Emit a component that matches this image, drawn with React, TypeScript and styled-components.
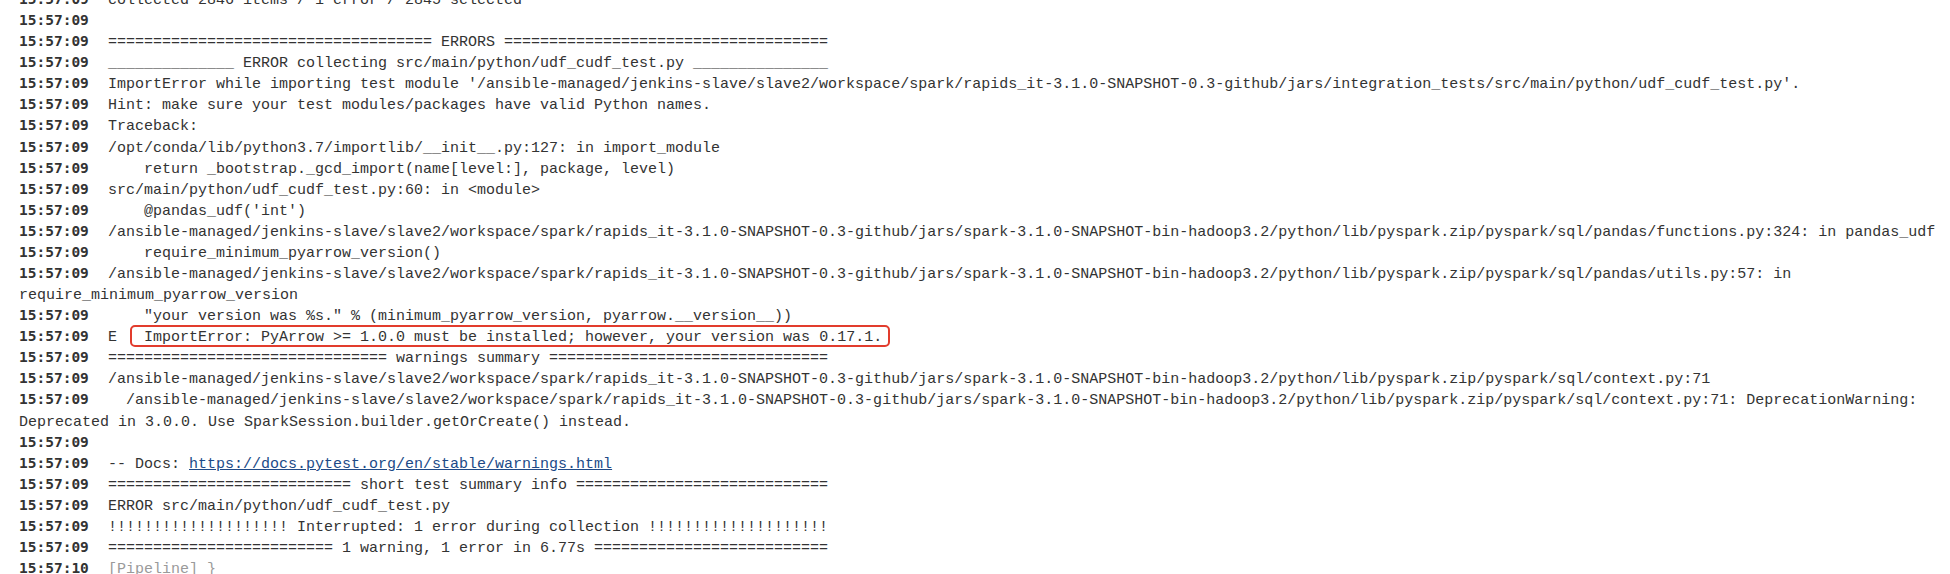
import React from 'react';
import styled, { createGlobalStyle } from 'styled-components';

const Global = createGlobalStyle`
  html, body { margin: 0; padding: 0; background: #ffffff; }
  body { overflow: hidden; }
`;

const Console = styled.pre`
  margin: -10px 0 0 0;
  padding: 0 0 0 19px;
  font-family: "Liberation Mono", "Courier New", monospace;
  font-size: 15px;
  line-height: 21.08px;
  color: #333333;
  white-space: pre;
  overflow: hidden;
`;

const Line = styled.div`
  line-height: 21.08px;
`;

const Stamp = styled.span`
  display: inline-block;
  width: 89px;
  font-family: "DejaVu Sans Mono", monospace;
  font-weight: bold;
  font-size: 14.5px;
  line-height: 1;
  color: #333333;
`;

const Muted = styled.span`
  color: #9a9a9a;
`;

const Link = styled.a`
  color: #204a87;
  text-decoration: underline;
`;

const Marked = styled.span`
  position: relative;
  &::after {
    content: "";
    position: absolute;
    left: -14px;
    right: -8px;
    top: -4px;
    bottom: -1px;
    border: 2px solid #e23c2d;
    border-radius: 5px;
    pointer-events: none;
  }
`;

const sep = (c: string, l: number, title: string, r: number) =>
  c.repeat(l) + ' ' + title + ' ' + c.repeat(r);

const JAR =
  '/ansible-managed/jenkins-slave/slave2/workspace/spark/rapids_it-3.1.0-SNAPSHOT-0.3-github/jars/spark-3.1.0-SNAPSHOT-bin-hadoop3.2/python/lib/pyspark.zip/pyspark/sql/';

type Entry = { ts?: string; content: React.ReactNode };

const T = '15:57:09';

const lines: Entry[] = [
  { ts: T, content: 'collected 2846 items / 1 error / 2845 selected' },
  { ts: T, content: '' },
  { ts: T, content: sep('=', 36, 'ERRORS', 36) },
  { ts: T, content: sep('_', 14, 'ERROR collecting src/main/python/udf_cudf_test.py', 15) },
  {
    ts: T,
    content:
      "ImportError while importing test module '/ansible-managed/jenkins-slave/slave2/workspace/spark/rapids_it-3.1.0-SNAPSHOT-0.3-github/jars/integration_tests/src/main/python/udf_cudf_test.py'.",
  },
  { ts: T, content: 'Hint: make sure your test modules/packages have valid Python names.' },
  { ts: T, content: 'Traceback:' },
  { ts: T, content: '/opt/conda/lib/python3.7/importlib/__init__.py:127: in import_module' },
  { ts: T, content: '    return _bootstrap._gcd_import(name[level:], package, level)' },
  { ts: T, content: 'src/main/python/udf_cudf_test.py:60: in <module>' },
  { ts: T, content: "    @pandas_udf('int')" },
  { ts: T, content: JAR + 'pandas/functions.py:324: in pandas_udf' },
  { ts: T, content: '    require_minimum_pyarrow_version()' },
  { ts: T, content: JAR + 'pandas/utils.py:57: in' },
  { content: 'require_minimum_pyarrow_version' },
  { ts: T, content: '    "your version was %s." % (minimum_pyarrow_version, pyarrow.__version__))' },
  {
    ts: T,
    content: (
      <>
        {'E   '}
        <Marked>ImportError: PyArrow &gt;= 1.0.0 must be installed; however, your version was 0.17.1.</Marked>
      </>
    ),
  },
  { ts: T, content: sep('=', 31, 'warnings summary', 31) },
  { ts: T, content: JAR + 'context.py:71' },
  { ts: T, content: '  ' + JAR + 'context.py:71: DeprecationWarning:' },
  { content: 'Deprecated in 3.0.0. Use SparkSession.builder.getOrCreate() instead.' },
  { ts: T, content: '' },
  {
    ts: T,
    content: (
      <>
        {'-- Docs: '}
        <Link href="#">https://docs.pytest.org/en/stable/warnings.html</Link>
      </>
    ),
  },
  { ts: T, content: sep('=', 27, 'short test summary info', 28) },
  { ts: T, content: 'ERROR src/main/python/udf_cudf_test.py' },
  { ts: T, content: sep('!', 20, 'Interrupted: 1 error during collection', 20) },
  { ts: T, content: sep('=', 25, '1 warning, 1 error in 6.77s', 26) },
  { ts: '15:57:10', content: <Muted>[Pipeline] {'}'}</Muted> },
];

export default function App() {
  return (
    <>
      <Global />
      <Console>
        {lines.map((l, i) => (
          <Line key={i}>
            {l.ts && <Stamp>{l.ts}</Stamp>}
            {l.content}
          </Line>
        ))}
      </Console>
    </>
  );
}
